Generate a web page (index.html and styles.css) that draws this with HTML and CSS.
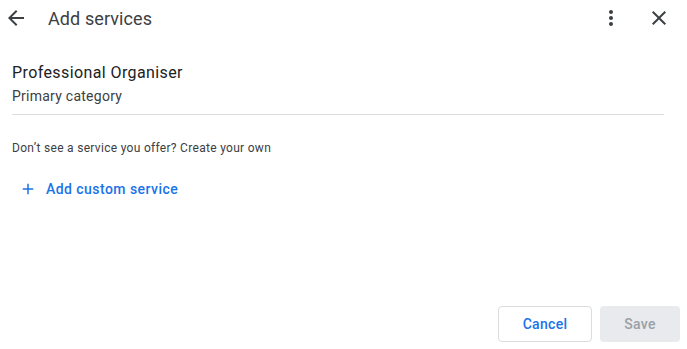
FILE: index.html
```html
<!DOCTYPE html>
<html lang="en">
<head>
  <meta charset="UTF-8">
  <title>Add services</title>
  <link rel="stylesheet" href="styles.css">
</head>
<body>
  <div class="dialog">
    <!-- Top bar -->
    <header class="topbar">
      <button class="icon-btn back" aria-label="Back">
        <svg width="24" height="24" viewBox="0 0 24 24"><path d="M20 11H7.83l5.59-5.59L12 4l-8 8 8 8 1.41-1.41L7.83 13H20v-2z" fill="#3c4043"/></svg>
      </button>
      <h1 class="title">Add services</h1>
      <div class="spacer"></div>
      <button class="icon-btn" aria-label="More">
        <svg width="24" height="24" viewBox="0 0 24 24"><path d="M12 8c1.1 0 2-.9 2-2s-.9-2-2-2-2 .9-2 2 .9 2 2 2zm0 2c-1.1 0-2 .9-2 2s.9 2 2 2 2-.9 2-2-.9-2-2-2zm0 6c-1.1 0-2 .9-2 2s.9 2 2 2 2-.9 2-2-.9-2-2-2z" fill="#3c4043"/></svg>
      </button>
      <button class="icon-btn" aria-label="Close">
        <svg width="24" height="24" viewBox="0 0 24 24"><path d="M19 6.41L17.59 5 12 10.59 6.41 5 5 6.41 10.59 12 5 17.59 6.41 19 12 13.41 17.59 19 19 17.59 13.41 12z" fill="#3c4043"/></svg>
      </button>
    </header>

    <!-- Category -->
    <section class="category">
      <div class="category-name">Professional Organiser</div>
      <div class="category-sub">Primary category</div>
    </section>

    <p class="hint">Don’t see a service you offer? Create your own</p>

    <button class="add-custom">
      <svg width="18" height="18" viewBox="0 0 24 24"><path d="M19 13h-6v6h-2v-6H5v-2h6V5h2v6h6v2z" fill="#1a73e8"/></svg>
      <span>Add custom service</span>
    </button>

    <!-- Actions -->
    <footer class="actions">
      <button class="btn btn-outline">Cancel</button>
      <button class="btn btn-disabled" disabled>Save</button>
    </footer>
  </div>
</body>
</html>
```

FILE: styles.css
```css
/* Base */
body {
  margin: 0;
  padding: 0;
  background: #fff;
  font-family: Roboto, Arial, sans-serif;
  color: #3c4043;
}
button {
  font-family: inherit;
  background: none;
  border: none;
  padding: 0;
  cursor: pointer;
}
.dialog {
  height: 349px;
  display: flex;
  flex-direction: column;
  box-sizing: border-box;
}
/* Top bar */
.topbar {
  display: flex;
  align-items: center;
  height: 36px;
  padding: 0 16px 0 4px;
}
.icon-btn {
  width: 24px;
  height: 24px;
  display: flex;
  align-items: center;
  justify-content: center;
  margin-left: 24px;
}
.icon-btn.back {
  margin-left: 0;
}
.title {
  margin: 0 0 0 20px;
  font-size: 18px;
  font-weight: 400;
  color: #3c4043;
  letter-spacing: 0.1px;
}
.spacer {
  flex: 1;
}
/* Category */
.category {
  margin: 26px 23px 0 12px;
  padding-bottom: 8px;
  border-bottom: 1px solid #dadce0;
}
.category-name {
  font-size: 16px;
  color: #202124;
  line-height: 22px;
  letter-spacing: 0.4px;
}
.category-sub {
  font-size: 14px;
  color: #3c4043;
  line-height: 20px;
  margin-top: 2px;
  letter-spacing: 0.25px;
}
.hint {
  margin: 26px 0 0 12px;
  font-size: 12px;
  letter-spacing: 0.3px;
  color: #3c4043;
}
.add-custom {
  display: flex;
  align-items: center;
  gap: 9px;
  margin: 25px 0 0 19px;
  color: #1a73e8;
  font-size: 14px;
  font-weight: 500;
  letter-spacing: 0.45px;
  align-self: flex-start;
}
/* Footer */
.actions {
  margin-top: auto;
  display: flex;
  justify-content: flex-end;
  gap: 8px;
  padding: 0 7px 7px 0;
}
.btn {
  height: 36px;
  border-radius: 4px;
  font-size: 14px;
  font-weight: 500;
  letter-spacing: 0.3px;
}
.btn-outline {
  width: 94px;
  border: 1px solid #dadce0;
  color: #1a73e8;
  background: #fff;
}
.btn-disabled {
  width: 80px;
  background: #e8eaed;
  color: #9aa0a6;
  cursor: default;
}
```
